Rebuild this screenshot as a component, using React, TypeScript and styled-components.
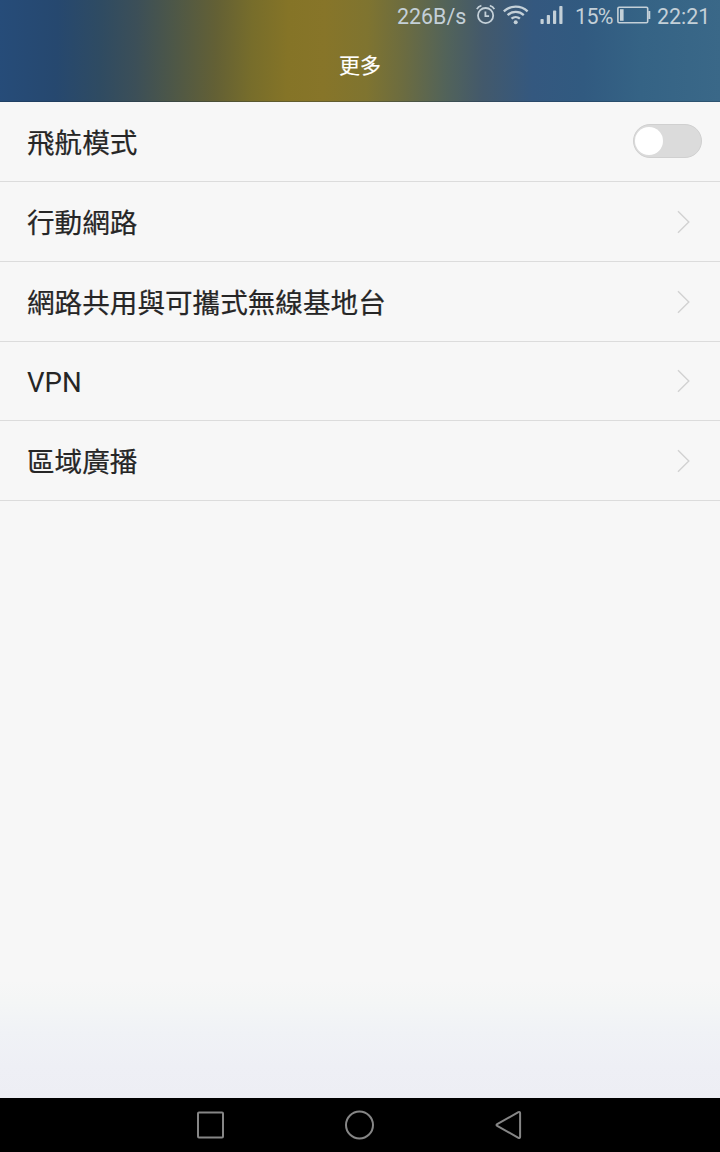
import React, { useState } from "react";
import styled, { createGlobalStyle } from "styled-components";

const GlobalStyle = createGlobalStyle`
  html, body { margin: 0; padding: 0; }
  body { font-family: Roboto, "Noto Sans CJK TC", sans-serif; background: #f7f7f7; }
  * { box-sizing: border-box; }
`;

const Screen = styled.div`
  display: flex;
  flex-direction: column;
  width: 720px;
  height: 1152px;
  overflow: hidden;
  background: #f7f7f7;
`;

const Header = styled.header`
  flex: none;
  height: 102px;
  background: linear-gradient(
    91deg,
    #264c79 0%,
    #26486f 8%,
    #2f4b62 14%,
    #3c4f58 19%,
    #4d5748 24%,
    #636035 30%,
    #776d2b 35%,
    #857427 40%,
    #877529 45%,
    #7f7430 51%,
    #6c6c40 56%,
    #52635a 62%,
    #43596b 67%,
    #34587f 74%,
    #315a80 81%,
    #356385 89%,
    #3a6888 100%
  );
  box-shadow: inset 0 -1px 0 rgba(20, 40, 60, 0.3);
`;

const StatusBar = styled.div`
  display: flex;
  align-items: center;
  justify-content: flex-end;
  height: 33px;
  padding-right: 10px;
  color: #c4d0d8;
`;

const StatusText = styled.span<{ $width: number; $gap: number; $spacing?: number }>`
  width: ${(p) => p.$width}px;
  margin-right: ${(p) => p.$gap}px;
  font-size: 21.4px;
  letter-spacing: ${(p) => p.$spacing ?? 0}px;
  line-height: 33px;
  white-space: nowrap;
`;

const StatusIcon = styled.svg<{ $gap: number }>`
  display: block;
  flex: none;
  height: 33px;
  margin-right: ${(p) => p.$gap}px;
  fill: none;
  stroke: currentColor;
`;

const Title = styled.h1`
  margin: 0;
  height: 66px;
  line-height: 66px;
  text-align: center;
  font-size: 21px;
  font-weight: 400;
  -webkit-text-stroke: 0.15px #fff;
  color: #fff;
`;

const Content = styled.main`
  flex: 1;
  background: linear-gradient(
    180deg,
    #f7f7f7 0,
    #f7f7f7 878px,
    #f4f6f6 900px,
    #f0f2f6 930px,
    #eeeff5 965px,
    #edeef4 996px
  );
`;

const Row = styled.div<{ $height: number }>`
  display: flex;
  align-items: center;
  justify-content: space-between;
  height: ${(p) => p.$height}px;
  padding: 0 18px 0 27px;
  border-bottom: 1px solid #dcdcdc;
`;

const Label = styled.span`
  padding-top: 3px;
  font-size: 27.6px;
  line-height: 40px;
  font-weight: 400;
  color: #262626;

  &:lang(zh) {
    padding-top: 5px;
    -webkit-text-stroke: 0.22px #262626;
  }
`;

const Toggle = styled.button<{ $on: boolean }>`
  display: flex;
  align-items: center;
  justify-content: ${(p) => (p.$on ? "flex-end" : "flex-start")};
  width: 69px;
  height: 34px;
  margin-bottom: 2px;
  padding: 0 1px;
  border: 1px solid #d0d0d0;
  border-radius: 17px;
  background: ${(p) => (p.$on ? "#3a8fb7" : "#dbdbdb")};
`;

const Knob = styled.span`
  width: 28px;
  height: 28px;
  border-radius: 50%;
  background: #fff;
`;

const Chevron = styled.svg`
  display: block;
  width: 14px;
  height: 24px;
  margin-right: 11px;
  fill: none;
  stroke: #d2d2d2;
  stroke-width: 1.4;
`;

const NavBar = styled.nav`
  display: flex;
  flex: none;
  justify-content: center;
  gap: 117px;
  height: 54px;
  padding-right: 1px;
  background: #000;
`;

const NavIcon = styled.svg`
  display: block;
  width: 32px;
  height: 54px;
  fill: none;
  stroke: #868686;
  stroke-width: 2;
  stroke-linejoin: round;
`;

const links = [
  { label: "行動網路", lang: "zh-Hant", height: 80 },
  { label: "網路共用與可攜式無線基地台", lang: "zh-Hant", height: 80 },
  { label: "VPN", lang: "en", height: 79 },
  { label: "區域廣播", lang: "zh-Hant", height: 80 },
];

export default function App() {
  const [airplane, setAirplane] = useState(false);
  return (
    <>
      <GlobalStyle />
      <Screen>
        <Header>
          <StatusBar>
            <StatusText $width={69} $gap={10}>226B/s</StatusText>
            <StatusIcon $gap={7} width="20" height="33" viewBox="0 0 20 33" strokeWidth="1.8">
              <circle cx="9.6" cy="15.6" r="7.6" />
              <path d="M9.4 11.5V16.2H13.1" />
              <path d="M0.9 9.2C1.7 7.5 3.3 6.2 5.4 5.7M18.3 9.2C17.5 7.5 15.9 6.2 13.8 5.7" />
            </StatusIcon>
            <StatusIcon $gap={11} width="26" height="33" viewBox="0 0 26 33" strokeWidth="2.3">
              <path d="M0.8 11.3C7.5 5 17.9 5 24.6 11.3" />
              <path d="M4.6 15.1C9.2 10.9 16.2 10.9 20.8 15.1" />
              <path d="M8.5 18.7C10.9 16.5 14.5 16.5 16.9 18.7" />
              <circle cx="12.7" cy="22.2" r="2" fill="currentColor" stroke="none" />
            </StatusIcon>
            <StatusIcon $gap={12} width="23" height="33" viewBox="0 0 23 33">
              <g fill="currentColor" stroke="none">
                <rect x="0.5" y="19" width="3.2" height="5" rx="0.8" />
                <rect x="6.8" y="15" width="3.2" height="9" rx="0.8" />
                <rect x="13" y="10.5" width="3.2" height="13.5" rx="0.8" />
                <rect x="19.3" y="6" width="3.2" height="18" rx="0.8" />
              </g>
            </StatusIcon>
            <StatusText $width={38} $gap={4} $spacing={-0.6}>15%</StatusText>
            <StatusIcon $gap={6} width="34" height="33" viewBox="0 0 34 33" strokeWidth="1.6">
              <rect x="0.9" y="7.2" width="29.8" height="15.6" rx="1.2" />
              <path d="M32.3 11V19" strokeWidth="2" />
              <rect x="3" y="9.2" width="3.6" height="11.6" fill="currentColor" stroke="none" />
            </StatusIcon>
            <StatusText $width={53} $gap={0}>22:21</StatusText>
          </StatusBar>
          <Title>更多</Title>
        </Header>
        <Content>
          <Row $height={80}>
            <Label lang="zh-Hant">飛航模式</Label>
            <Toggle $on={airplane} onClick={() => setAirplane(!airplane)} aria-label="飛航模式">
              <Knob />
            </Toggle>
          </Row>
          {links.map((item) => (
            <Row key={item.label} $height={item.height}>
              <Label lang={item.lang}>{item.label}</Label>
              <Chevron viewBox="0 0 14 24">
                <path d="M1 1.3L11.8 12L1 22.7" />
              </Chevron>
            </Row>
          ))}
        </Content>
        <NavBar>
          <NavIcon viewBox="0 0 32 54">
            <rect x="3" y="14.5" width="25" height="25" rx="1" />
          </NavIcon>
          <NavIcon viewBox="0 0 32 54">
            <circle cx="15.5" cy="27" r="13.5" />
          </NavIcon>
          <NavIcon viewBox="0 0 32 54">
            <path d="M4.2 26.2L25.4 14.2Q27.1 13.4 27.1 15.2V38.8Q27.1 40.6 25.4 39.8L4.2 27.8Q2.8 27 4.2 26.2Z" />
          </NavIcon>
        </NavBar>
      </Screen>
    </>
  );
}
